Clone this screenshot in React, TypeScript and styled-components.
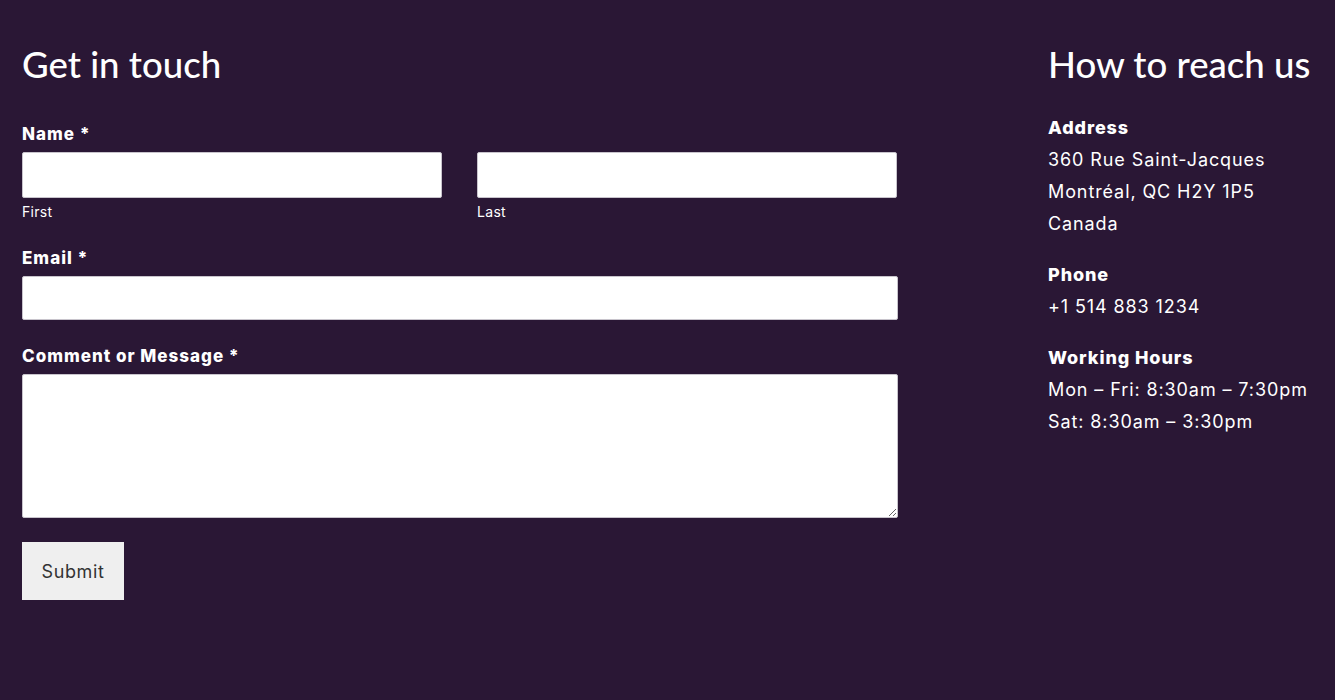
import React from "react";
import styled, { createGlobalStyle } from "styled-components";

const GlobalStyle = createGlobalStyle`
    html, body {
        margin: 0;
        padding: 0;
        background-color: #2a1735;
    }
    body {
        font-family: Inter, "Liberation Sans", sans-serif;
    }
    * {
        box-sizing: border-box;
    }
`;

export default function App() {
    return (
        <>
            <GlobalStyle />
            <StyledPage>
                <StyledFormColumn>
                    <StyledTitle>Get in touch</StyledTitle>
                    <StyledForm onSubmit={(e) => e.preventDefault()}>
                        <StyledField>
                            <StyledLabel>Name *</StyledLabel>
                            <StyledNameRow>
                                <StyledSubField>
                                    <StyledInput type="text" $height={46} />
                                    <StyledSubLabel>First</StyledSubLabel>
                                </StyledSubField>
                                <StyledSubField>
                                    <StyledInput type="text" $height={46} />
                                    <StyledSubLabel>Last</StyledSubLabel>
                                </StyledSubField>
                            </StyledNameRow>
                        </StyledField>
                        <StyledField>
                            <StyledLabel>Email *</StyledLabel>
                            <StyledInput type="email" $height={44} />
                        </StyledField>
                        <StyledField>
                            <StyledLabel>Comment or Message *</StyledLabel>
                            <StyledTextArea />
                        </StyledField>
                        <StyledButton type="submit">Submit</StyledButton>
                    </StyledForm>
                </StyledFormColumn>

                <StyledInfoColumn>
                    <StyledTitle>How to reach us</StyledTitle>
                    <StyledInfoBlock>
                        <StyledInfoLabel>Address</StyledInfoLabel>
                        <StyledInfoLine>360 Rue Saint-Jacques</StyledInfoLine>
                        <StyledInfoLine>Montréal, QC H2Y 1P5</StyledInfoLine>
                        <StyledInfoLine>Canada</StyledInfoLine>
                    </StyledInfoBlock>
                    <StyledInfoBlock>
                        <StyledInfoLabel>Phone</StyledInfoLabel>
                        <StyledInfoLine>+1 514 883 1234</StyledInfoLine>
                    </StyledInfoBlock>
                    <StyledInfoBlock>
                        <StyledInfoLabel>Working Hours</StyledInfoLabel>
                        <StyledInfoLine>Mon – Fri: 8:30am – 7:30pm</StyledInfoLine>
                        <StyledInfoLine>Sat: 8:30am – 3:30pm</StyledInfoLine>
                    </StyledInfoBlock>
                </StyledInfoColumn>
            </StyledPage>
        </>
    );
}

// ---------------------------------------------------- Style ----------------------------------------------------------- //

const StyledPage = styled.div`
    display: flex;
    justify-content: space-between;
    min-height: 700px;
    padding: 40px 25px 0 22px;
    color: #ffffff;
`;

const StyledFormColumn = styled.div`
    width: 876px;
`;

const StyledInfoColumn = styled.div`
    width: 262px;
`;

const StyledTitle = styled.h2`
    margin: 0;
    font-family: Lato, "Liberation Sans", sans-serif;
    font-size: 36.6px;
    font-weight: 500;
    line-height: 48px;
    white-space: nowrap;
`;

const StyledForm = styled.form`
    display: flex;
    flex-direction: column;
    gap: 24px;
    margin-top: 34px;
`;

const StyledField = styled.div`
    display: flex;
    flex-direction: column;
`;

const StyledLabel = styled.label`
    font-size: 17px;
    font-weight: 800;
    letter-spacing: 1px;
    line-height: 24px;
    margin-bottom: 6px;
`;

const StyledNameRow = styled.div`
    display: grid;
    grid-template-columns: 420px 420px;
    column-gap: 35px;
`;

const StyledSubField = styled.div`
    display: flex;
    flex-direction: column;
`;

const StyledSubLabel = styled.span`
    font-size: 14px;
    letter-spacing: 0.3px;
    line-height: 20px;
    margin-top: 4px;
`;

const StyledInput = styled.input<{ $height: number }>`
    width: 100%;
    height: ${({ $height }) => $height}px;
    border: 1px solid #c8c4cc;
    border-radius: 2px;
    background: #ffffff;
    font-size: 16px;
    padding: 8px 12px;
    outline: none;
`;

const StyledTextArea = styled.textarea`
    width: 100%;
    height: 144px;
    border: 1px solid #c8c4cc;
    border-radius: 2px;
    background: #ffffff;
    font-size: 16px;
    padding: 8px 12px;
    outline: none;
    resize: vertical;
    display: block;
`;

const StyledButton = styled.button`
    align-self: flex-start;
    width: 102px;
    height: 58px;
    border: none;
    border-radius: 0;
    background-color: #efefef;
    color: #333333;
    font-family: Inter, "Liberation Sans", sans-serif;
    font-size: 18px;
    letter-spacing: 0.6px;
    cursor: pointer;
`;

const StyledInfoBlock = styled.div`
    display: flex;
    flex-direction: column;
    margin-top: 19px;

    &:first-of-type {
        margin-top: 24px;
    }
`;

const StyledInfoLabel = styled.span`
    font-size: 18px;
    font-weight: 800;
    letter-spacing: 0.9px;
    line-height: 32px;
`;

const StyledInfoLine = styled.span`
    font-size: 18px;
    letter-spacing: 0.9px;
    line-height: 32px;
    white-space: nowrap;
`;
